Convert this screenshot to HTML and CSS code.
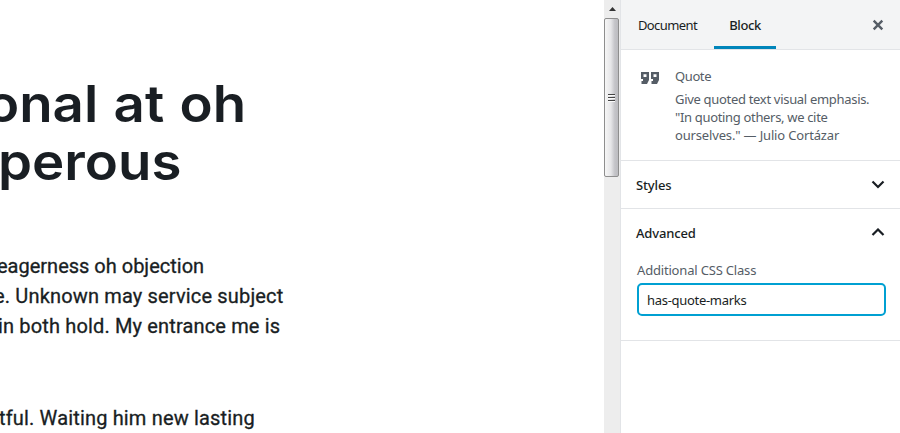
FILE: index.html
```html
<!DOCTYPE html>
<html lang="en">
<head>
<meta charset="utf-8">
<title>Block settings</title>
<link rel="stylesheet" href="styles.css">
</head>
<body>
<div class="editor">
  <main class="content">
    <h1><span class="line h-one">onal at oh</span><span class="line h-two">perous</span></h1>
    <p class="first"><span class="line p-one">eagerness oh objection</span><span class="line p-two">e. Unknown may service subject</span><span class="line p-three">in both hold. My entrance me is</span></p>
    <p class="second"><span class="line p-four">tful. Waiting him new lasting</span></p>
  </main>
  <div class="scrollbar">
    <svg class="up" width="14" height="18" viewBox="0 0 14 18"><path d="M4 11l3.500-4 3.500 4z" fill="#333"/></svg>
    <div class="thumb"><i></i><i></i><i></i></div>
  </div>
  <aside class="sidebar">
    <header class="tabs">
      <button class="tab doc"><span>Document</span></button>
      <button class="tab block active"><span>Block</span></button>
      <button class="close"><svg width="20" height="20" viewBox="0 0 20 20"><path d="M5.700 5.700l8.600 8.600M14.300 5.700l-8.600 8.600" stroke="#555d66" stroke-width="2.400"/></svg></button>
    </header>
    <section class="card">
      <svg class="quote" width="20" height="14" viewBox="0 0 20 14"><path fill-rule="evenodd" fill="#555d66" d="M1 1h8v8l-2 4H1.500v-3H3V8H1zM3.500 3.200v2.800h3V3.200zM11 1h8v8l-2 4h-5.500v-3H13V8h-2zM13.500 3.200v2.800h3V3.200z"/></svg>
      <div class="info">
        <div class="title"><span>Quote</span></div>
        <div class="description"><span class="line d-one">Give quoted text visual emphasis.</span><span class="line d-two">"In quoting others, we cite</span><span class="line d-three">ourselves." — Julio Cortázar</span></div>
      </div>
    </section>
    <section class="panel">
      <button class="toggle"><span>Styles</span><svg width="14" height="10" viewBox="0 0 14 10"><path d="M1.500 1.500L7 7l5.500-5.500" fill="none" stroke="#191e23" stroke-width="2.200"/></svg></button>
    </section>
    <section class="panel advanced">
      <button class="toggle"><span>Advanced</span><svg width="14" height="10" viewBox="0 0 14 10"><path d="M1.500 7L7 1.500 12.500 7" fill="none" stroke="#191e23" stroke-width="2.200"/></svg></button>
      <label for="css-class">Additional CSS Class</label>
      <input id="css-class" type="text" value="has-quote-marks">
    </section>
  </aside>
</div>
</body>
</html>
```
FILE: styles.css
```css
* { box-sizing: border-box; }
body { margin: 0; background: #fff; color: #191e23; }
button { border: 0; padding: 0; background: none; font: inherit; color: inherit; letter-spacing: inherit; }
svg { display: block; flex: none; }
.editor { display: grid; grid-template-columns: 604px 16px 280px; height: 433px; overflow: hidden; }
.line { display: block; width: max-content; white-space: pre; }

.content { overflow: hidden; padding-top: 75px; font-family: Roboto, sans-serif; }
h1 { margin: 0; font: 600 51px/58px Inter, sans-serif; color: #191e23; }
h1 .line { transform: scaleX(1.07); transform-origin: left; }
.h-one { margin-left: -14px; word-spacing: 1.5px; }
.h-two { margin-left: -2px; }
p { margin: 0; font-size: 20px; font-weight: 400; -webkit-text-stroke: .3px #191e23; line-height: 30px; color: #191e23; }
.first { margin-top: 60px; }
.second { margin-top: 62px; }
.p-one { margin-left: -3px; }
.p-two { margin-left: -6px; letter-spacing: .16px; }
.p-three { margin-left: -2px; letter-spacing: .15px; }
.p-four { margin-left: -1px; letter-spacing: .16px; }

.scrollbar { background: #ededed; }
.up { margin-left: 1px; }
.thumb { width: 15px; height: 159px; border: 1px solid #8e8e8e; border-radius: 2px; background: linear-gradient(90deg, #f6f6f6, #e6e6e8 45%, #c4c4c8 75%, #bcbcc0); display: flex; flex-direction: column; align-items: center; justify-content: center; gap: 2px; }
.thumb i { display: block; width: 7px; height: 1px; background: #444; box-shadow: 0 1px #fafafa; }

.sidebar { border-left: 1px solid #e2e4e7; font: 13px/18px "Noto Sans", sans-serif; background: #fff; }
.tabs { height: 50px; display: flex; background: #f3f4f5; border-bottom: 1px solid #e2e4e7; padding-right: 12px; }
.tab { height: 49px; padding-top: 4px; display: flex; align-items: center; justify-content: center; border-bottom: 3px solid transparent; }
.doc { width: 93px; letter-spacing: -.6px; }
.block { width: 62px; border-color: #0085ba; font-weight: 500; letter-spacing: -.4px; }
.close { margin-left: auto; align-self: center; }

.card { height: 111px; display: flex; padding: 17px 0 0 19px; border-bottom: 1px solid #e2e4e7; color: #555d66; }
.quote { margin-top: 4px; }
.info { margin-left: 15px; }
.title { letter-spacing: -.4px; }
.description { margin-top: 5px; }
.d-one { letter-spacing: -.31px; }
.d-two { letter-spacing: -.33px; }
.d-three { letter-spacing: -.16px; }
.panel { height: 48px; padding: 0 15px; border-bottom: 1px solid #e2e4e7; }
.toggle { width: 100%; height: 48px; display: flex; align-items: center; justify-content: space-between; font-weight: 500; letter-spacing: -.15px; }
.advanced { height: 132px; }
label { display: block; margin: 4px 0 0 1px; color: #555d66; letter-spacing: -.18px; }
input { display: block; width: 249px; height: 33px; margin: 4px 0 0 1px; padding: 0 8px; border: 2px solid #00a0d2; border-radius: 5px; outline: 0; font: inherit; letter-spacing: -.3px; color: #191e23; background: #fff; }
```
